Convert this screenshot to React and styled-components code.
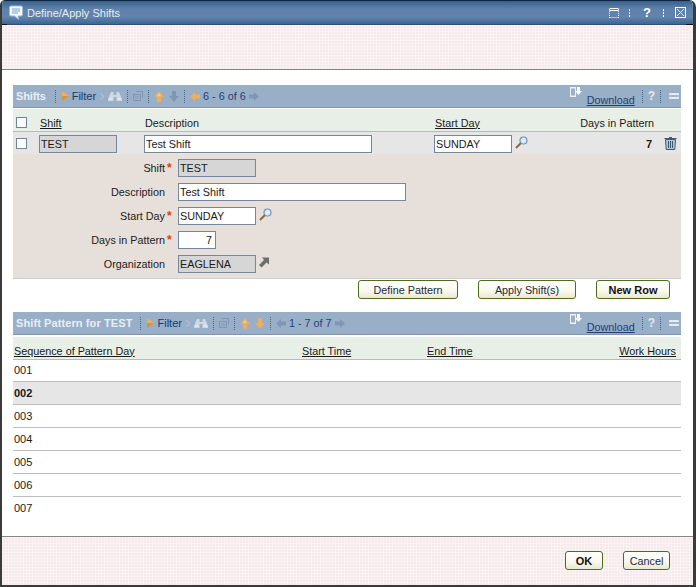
import React from 'react';
import styled, { createGlobalStyle } from 'styled-components';

const Global = createGlobalStyle`
  html, body { margin: 0; padding: 0; background: #fff; }
  body { font-family: "Liberation Sans", Arial, sans-serif; font-size: 10.8px; color: #1a1a1a; }
`;
const Frame = styled.div`
  width: 696px; height: 587px; box-sizing: border-box; display: flex; flex-direction: column;
  background: #fff; border-left: 2px solid #3a3a3a; border-right: 3px solid #3a3a3a; border-bottom: 2px solid #3a3a3a;
  border-radius: 5px 7px 0 0; overflow: hidden;
`;
const TitleBar = styled.div`
  position: relative; height: 25px; flex: none; box-sizing: border-box; display: flex; align-items: center;
  margin: 0 -3px 0 -2px; padding: 0 10px 0 9px;
  border-top: 1px solid #10243c; border-bottom: 1px solid #2c4f7c;
  background: linear-gradient(#38618f 0%, #5f82aa 35%, #6283ab 70%, #3d6691 100%);
  color: #e6ecf3; font-size: 11px;
  &::before, &::after { content: ""; position: absolute; bottom: -1px; height: 1px; width: 7px; background: #111; }
  &::before { left: 0; }
  &::after { right: 3px; }
`;
const TitleText = styled.span` flex: 1; margin-left: 4px; `;
const Pink = styled.div`
  background-color: #f5e9e9;
  background-image: linear-gradient(#f9f3f3 1px, transparent 1px), linear-gradient(90deg, #f9f3f3 1px, transparent 1px);
  background-size: 3px 3px;
`;
const TopBand = styled(Pink)`
  height: 45px; box-sizing: border-box; flex: none; margin: 0 -3px 0 -2px;
  border-left: 1px solid #bdbdbd; border-right: 3px solid #e4e4e4; border-bottom: 1px solid #858585;
`;
const Body = styled.div` flex: 1; padding: 15px 12px 0 11px; min-height: 0; display: flex; flex-direction: column; `;
const Footer = styled(Pink)`
  height: 49px; flex: none; box-sizing: border-box; border-top: 1px solid #858585;
  display: flex; align-items: flex-start; justify-content: flex-end; gap: 20px; padding: 14px 23px 0 0;
`;
const Toolbar = styled.div`
  height: 23px; box-sizing: border-box; display: flex; align-items: center; background: #99afc8;
  border-bottom: 1px solid #8094ac; padding-left: 3px; color: #1d3f70;
`;
const ToolTitle = styled.span`
  font-weight: bold; color: #e8eef5; font-size: 11px; margin-right: ${p => p.$gap}px; letter-spacing: ${p => p.$ls}px;
`;
const Sep = styled.span` width: 0; height: 13px; border-left: 1px dotted #42688f; margin: 0 ${p => p.$r ?? 5}px 0 ${p => p.$l ?? 5}px; `;
const FilterText = styled.span` margin: 0 4px 0 3px; color: #163a6e; font-size: 11px; `;
const Pager = styled.span` margin: 0 3px; color: #1d437a; `;
const Gap = styled.span` flex: none; width: ${p => p.$w}px; `;
const Spacer = styled.span` flex: 1; `;
const DownloadSlot = styled.span` align-self: flex-start; display: flex; margin-top: 2px; `;
const DownloadLink = styled.a`
  color: #1d3f70; text-decoration: underline; align-self: flex-end; margin: 0 0 0 5px; line-height: 14px;
`;
const ShiftHead = styled.div`
  display: grid; grid-template-columns: 24px 105px 290px 110px 109px 27px; align-items: center;
  height: 24px; box-sizing: border-box; padding: 5px 0 0 3px; background: #e8efe6; border-top: 1px solid #fff; border-bottom: 1px solid #b9b9b9;
`;
const HeadLabel = styled.span`
  color: #1a1a1a; ${p => p.$link && 'text-decoration: underline;'} ${p => p.$right && 'text-align: right;'}
`;
const Check = styled.span` width: 9px; height: 9px; border: 1px solid #6f8599; background: #fff; display: block; `;
const RowCheck = styled(Check)` margin-top: -2px; `;
const ShiftRow = styled.div`
  display: grid; grid-template-columns: 24px 105px 290px 110px 109px 27px; align-items: center;
  height: 22px; box-sizing: border-box; padding: 2px 0 0 3px; background: #e6e6e6;
`;
const Field = styled.span`
  display: block; box-sizing: border-box; height: 18px; line-height: 16px; padding-left: 1px; flex: none;
  width: ${p => p.$w}px; border: 1px solid #73889c; background: ${p => p.$ro ? '#d6d6d6' : '#fff'}; color: #1a1a1a;
  ${p => p.$num && 'text-align: right; padding: 0 3px 0 0;'}
`;
const Cell = styled.div` margin-left: -1px; display: flex; align-items: flex-start; gap: 3px; `;
const StrongNum = styled.span` font-weight: bold; text-align: right; padding-right: 2px; font-size: 11px; `;
const TrashCell = styled.span` display: flex; justify-content: flex-end; padding: 0 4px 2px 0; `;
const Detail = styled.div`
  height: 125px; box-sizing: border-box; background: #e6dfda; border-bottom: 1px solid #cfcfcf; padding-top: 5px;
  display: grid; grid-template-columns: 152px 13px 1fr; grid-auto-rows: 18px; row-gap: 6px; align-items: center;
`;
const Label = styled.span` text-align: right; color: #222; `;
const Star = styled.span` color: #e8400c; font-weight: bold; font-size: 12px; line-height: 10px; padding-left: 2px; `;
const Value = styled.div` display: flex; align-items: flex-start; gap: 3px; `;
const IconNudge = styled.span` display: flex; margin-top: ${p => p.$t ?? 1}px; `;
const Buttons = styled.div` display: flex; justify-content: flex-end; gap: 20px; padding: 1px 11px 0 0; height: 19px; margin-bottom: 13px; `;
const Btn = styled.button`
  box-sizing: border-box; height: 19px; width: ${p => p.$w}px; padding: 0; border: 1px solid #4d6d1e; border-radius: 3px;
  background: linear-gradient(#fff 0%, #fbf9ee 55%, #ece7d2 100%); font-family: inherit;
  font-size: ${p => p.$bold ? '11px' : '10.8px'}; color: ${p => p.$bold ? '#111' : '#1a2a40'}; font-weight: ${p => p.$bold ? 'bold' : 'normal'};
`;
const PatternHead = styled.div`
  display: grid; grid-template-columns: 288px 125px 1fr auto; align-items: center; height: 23px; box-sizing: border-box;
  margin-top: 2px; background: #e8efe6; border-bottom: 1px solid #b9b9b9; padding: 5px 5px 0 1px;
`;
const Row = styled.div`
  height: ${p => p.$first ? 22 : 23}px; box-sizing: border-box; display: flex; align-items: center; padding: 0 0 1px 1px;
  font-size: 11px;
  border-bottom: ${p => p.$last ? 'none' : '1px solid #bdbdbd'};
  ${p => p.$sel && 'background:#e6e6e6; font-weight:bold;'}
`;
const DotSep = styled.span` width: 1px; height: 8px; margin: 0 ${p => p.$r}px 0 ${p => p.$l}px; background: repeating-linear-gradient(#fff 0 2px, transparent 2px 3px); `;
const Q = styled.span` font-weight: bold; color: #fff; font-size: 13px; line-height: 13px; `;
const MiniQ = styled.span` font-weight: bold; color: #e3eaf2; font-size: 12px; `;

const Chat = () => (
  <svg width="14" height="16" viewBox="0 0 14 16"><path d="M2 1h10a1.500 1.500 0 0 1 1.500 1.500v7A1.500 1.500 0 0 1 12 11H9l.5 3.500L5.500 11H2A1.500 1.500 0 0 1 .5 9.500v-7A1.500 1.500 0 0 1 2 1z" fill="#f4f8fc" stroke="#9dbcdc"/><path d="M3 4h8M3 6h8M3 8h6" stroke="#7ea4cc"/></svg>
);
const WinRestore = () => (
  <svg width="10" height="10" viewBox="0 0 10 10"><path d="M.5.500h9M.5 2.500h9" stroke="#fff"/><path d="M.5 1v9M9.500 1v9M.5 9.500h9" stroke="#fff" strokeDasharray="1 1"/></svg>
);
const Close = () => (
  <svg width="11" height="11" viewBox="0 0 11 11"><rect x=".5" y=".5" width="10" height="10" fill="none" stroke="#fff"/><path d="M2 2l7 7M9 2l-7 7" stroke="#dfe8f2"/></svg>
);
const Play = () => (<svg width="7" height="10" viewBox="0 0 7 10"><path d="M0 0l7 5-7 5z" fill="#ecb05a"/><path d="M0 5h7l-7 5z" fill="#cf9541"/></svg>);
const Chevron = () => (<svg width="5" height="7" viewBox="0 0 5 7"><path d="M.5.500l3.500 3-3.500 3" fill="none" stroke="#b9c8da"/></svg>);
const Binoc = () => (
  <svg width="14" height="11" viewBox="0 0 14 11"><path d="M3 1h2.500v3h3V1H11l3 7v2H8.500V6h-3v4H0V8z" fill="#cfd8e3"/><path d="M1 8h3.500M9.500 8H13" stroke="#eef3f8"/></svg>
);
const Detach = () => (
  <svg width="10" height="10" viewBox="0 0 10 10"><path d="M.5 3.500h7v6h-7zM3 .500h6.500v6" fill="none" stroke="#7f96b0"/><rect x="2" y="5" width="4" height="3" fill="#8ea5bf"/></svg>
);
const Up = ({ c = '#ecb05a' }) => (<svg width="10" height="11" viewBox="0 0 10 11"><path d="M5 0l5 6H7v5H3V6H0z" fill={c}/><path d="M5 2L3 5h4z" fill="#f6d49a" opacity=".8"/></svg>);
const Down = ({ c = '#7f97b3' }) => (<svg width="10" height="11" viewBox="0 0 10 11"><path d="M5 11L0 5h3V0h4v5h3z" fill={c}/></svg>);
const Left = ({ c = '#ecb05a' }) => (<svg width="10" height="9" viewBox="0 0 10 9"><path d="M0 4.500L5 0v2.500h5v4H5V9z" fill={c}/></svg>);
const Right = ({ c = '#7f97b3' }) => (<svg width="10" height="9" viewBox="0 0 10 9"><path d="M10 4.500L5 0v2.500H0v4h5V9z" fill={c}/></svg>);
const DownloadIcon = () => (
  <svg width="12" height="11" viewBox="0 0 12 11"><path d="M0 0h6v10H0z" fill="#eef3f8"/><path d="M1 1.500h4v7H1z" fill="#99afc8"/><path d="M7 0h3v4h2L8.500 8 5 4h2z" fill="#fff"/></svg>
);
const Minus = () => (<svg width="10" height="6" viewBox="0 0 10 6"><rect width="10" height="6" rx="1" fill="#e6ecf3"/><rect y="2" width="10" height="2" fill="#a3b6cc"/></svg>);
const Magnifier = () => (
  <svg width="13" height="13" viewBox="0 0 13 13"><circle cx="8.500" cy="4.500" r="3.500" fill="#dfeaf6" stroke="#6f92b5" strokeWidth="1.200"/><path d="M5.700 7.300L1 12" stroke="#8a6a4a" strokeWidth="2"/></svg>
);
const LinkArrow = () => (
  <svg width="10" height="11" viewBox="0 0 10 11"><path d="M3 0.500h7v7L7.500 5.500 2.500 10.500 0 8l5-5z" fill="#6d6d6d"/></svg>
);
const Trash = () => (
  <svg width="13" height="14" viewBox="0 0 13 14"><path d="M5 1.500h3M.5 2.500h12" stroke="#3f5a75" fill="none"/><path d="M1.500 3.500h10l-.7 10H2.200z" fill="#b4c6d6" stroke="#3f5a75"/><path d="M4.500 5v7M6.500 5v7M8.500 5v7" stroke="#3f5a75"/></svg>
);

const Tools = ({ title, titleGap, titleSpacing, pager, downColor, leftColor }) => (
  <Toolbar>
    <ToolTitle $gap={titleGap} $ls={titleSpacing}>{title}</ToolTitle>
    <Sep $l={0} $r={6} />
    <Play />
    <FilterText>Filter</FilterText>
    <Chevron />
    <Gap $w={3} />
    <Binoc />
    <Sep />
    <Detach />
    <Sep />
    <Up />
    <Gap $w={5} />
    <Down c={downColor} />
    <Sep />
    <Left c={leftColor} />
    <Pager>{pager}</Pager>
    <Right />
    <Spacer />
    <DownloadSlot><DownloadIcon /></DownloadSlot>
    <DownloadLink>Download</DownloadLink>
    <Sep $l={7} $r={5} />
    <MiniQ>?</MiniQ>
    <Sep $l={5} $r={8} />
    <Minus />
    <Gap $w={2} />
  </Toolbar>
);

const rows = ['001', '002', '003', '004', '005', '006', '007'];

export default function App() {
  return (
    <>
      <Global />
      <Frame>
        <TitleBar>
          <Chat />
          <TitleText>Define/Apply Shifts</TitleText>
          <WinRestore />
          <DotSep $l={10} $r={13} />
          <Q>?</Q>
          <DotSep $l={12} $r={11} />
          <Close />
        </TitleBar>
        <TopBand />
        <Body>
          <Tools title="Shifts" titleGap={9} titleSpacing={-0.15} pager="6 - 6 of 6" />
          <ShiftHead>
            <Check />
            <HeadLabel $link>Shift</HeadLabel>
            <HeadLabel>Description</HeadLabel>
            <HeadLabel $link>Start Day</HeadLabel>
            <HeadLabel $right>Days in Pattern</HeadLabel>
            <span />
          </ShiftHead>
          <ShiftRow>
            <RowCheck />
            <Cell><Field $ro $w={78}>TEST</Field></Cell>
            <Cell><Field $w={228}>Test Shift</Field></Cell>
            <Cell><Field $w={78}>SUNDAY</Field><IconNudge><Magnifier /></IconNudge></Cell>
            <StrongNum>7</StrongNum>
            <TrashCell><Trash /></TrashCell>
          </ShiftRow>
          <Detail>
            <Label>Shift</Label><Star>*</Star><Value><Field $ro $w={78}>TEST</Field></Value>
            <Label>Description</Label><span /><Value><Field $w={228}>Test Shift</Field></Value>
            <Label>Start Day</Label><Star>*</Star><Value><Field $w={78}>SUNDAY</Field><IconNudge><Magnifier /></IconNudge></Value>
            <Label>Days in Pattern</Label><Star>*</Star><Value><Field $num $w={38}>7</Field></Value>
            <Label>Organization</Label><span /><Value><Field $ro $w={78}>EAGLENA</Field><IconNudge $t={2}><LinkArrow /></IconNudge></Value>
          </Detail>
          <Buttons>
            <Btn $w={100}>Define Pattern</Btn>
            <Btn $w={98}>Apply Shift(s)</Btn>
            <Btn $w={74} $bold>New Row</Btn>
          </Buttons>
          <Tools title="Shift Pattern for TEST" titleGap={8} titleSpacing={0.1} pager="1 - 7 of 7" downColor="#ecb05a" leftColor="#7f97b3" />
          <PatternHead>
            <HeadLabel $link>Sequence of Pattern Day</HeadLabel>
            <HeadLabel $link>Start Time</HeadLabel>
            <HeadLabel $link>End Time</HeadLabel>
            <HeadLabel $link>Work Hours</HeadLabel>
          </PatternHead>
          {rows.map((r, i) => <Row key={r} $first={i === 0} $sel={i === 1} $last={i === 6}>{r}</Row>)}
        </Body>
        <Footer>
          <Btn $w={38} $bold>OK</Btn>
          <Btn $w={47}>Cancel</Btn>
        </Footer>
      </Frame>
    </>
  );
}
